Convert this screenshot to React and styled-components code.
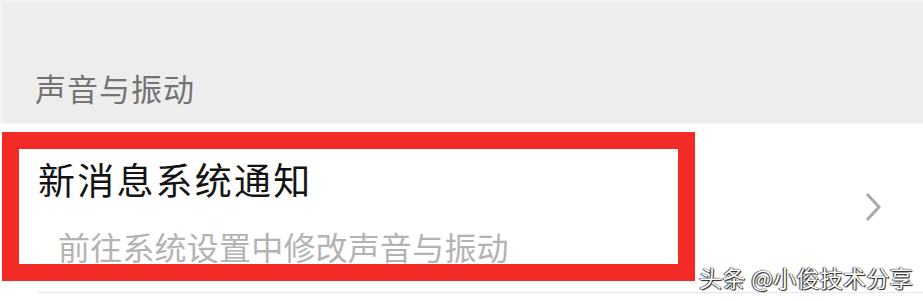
import React from 'react';
import styled, { createGlobalStyle } from 'styled-components';

const GlobalStyle = createGlobalStyle`
  html, body { margin: 0; padding: 0; background: #ffffff; }
  body { font-family: "Noto Sans CJK SC", "Noto Sans", sans-serif; }
`;

const Page = styled.div`
  position: relative;
  width: 923px;
  height: 301px;
  overflow: hidden;
  background: #ffffff;
`;

const SectionHeader = styled.div`
  height: 123px;
  box-sizing: border-box;
  background: #ededed;
  border-left: 3px solid #f3f3f3;
  border-top: 2px solid #f3f3f3;
  display: flex;
  align-items: flex-end;
  padding: 0 0 20px 32px;
  font-size: 31px;
  line-height: 1;
  letter-spacing: 1px;
  color: #747474;
`;

const Row = styled.div`
  display: flex;
  align-items: center;
  justify-content: space-between;
  padding: 8px 42px 11px 2px;
  border-top: 1px solid #f4f4f4;
`;

const Highlight = styled.div`
  width: 693px;
  box-sizing: border-box;
  border: 17px solid #f22b26;
  padding: 12px 19px 2px;
  display: flex;
  flex-direction: column;
  gap: 32px;
`;

const Title = styled.div`
  font-size: 37px;
  line-height: 1;
  letter-spacing: 2.2px;
  color: #141414;
`;

const Subtitle = styled.div`
  margin-left: 20px;
  font-size: 32px;
  line-height: 1;
  letter-spacing: 0.2px;
  color: #b3b3b3;
`;

const Divider = styled.div`
  height: 1px;
  margin-left: 37px;
  background: #e6e6e6;
`;

const Watermark = styled.div`
  position: absolute;
  right: 10px;
  top: 266px;
  font-size: 23px;
  line-height: 1;
  color: #ffffff;
  letter-spacing: 0.3px;
  text-shadow: 0 0 1px #000, 1px 1px 1px #222, -1px 0 1px #444;
`;

const Chevron = () => (
  <svg width="16" height="30" viewBox="0 0 16 30">
    <polyline points="2,2 14,15 2,28" fill="none" stroke="#a9a9a9" strokeWidth="3" />
  </svg>
);

export default function App() {
  return (
    <Page>
      <GlobalStyle />
      <SectionHeader>声音与振动</SectionHeader>
      <Row>
        <Highlight>
          <Title>新消息系统通知</Title>
          <Subtitle>前往系统设置中修改声音与振动</Subtitle>
        </Highlight>
        <Chevron />
      </Row>
      <Divider />
      <Watermark>头条 @小俊技术分享</Watermark>
    </Page>
  );
}
